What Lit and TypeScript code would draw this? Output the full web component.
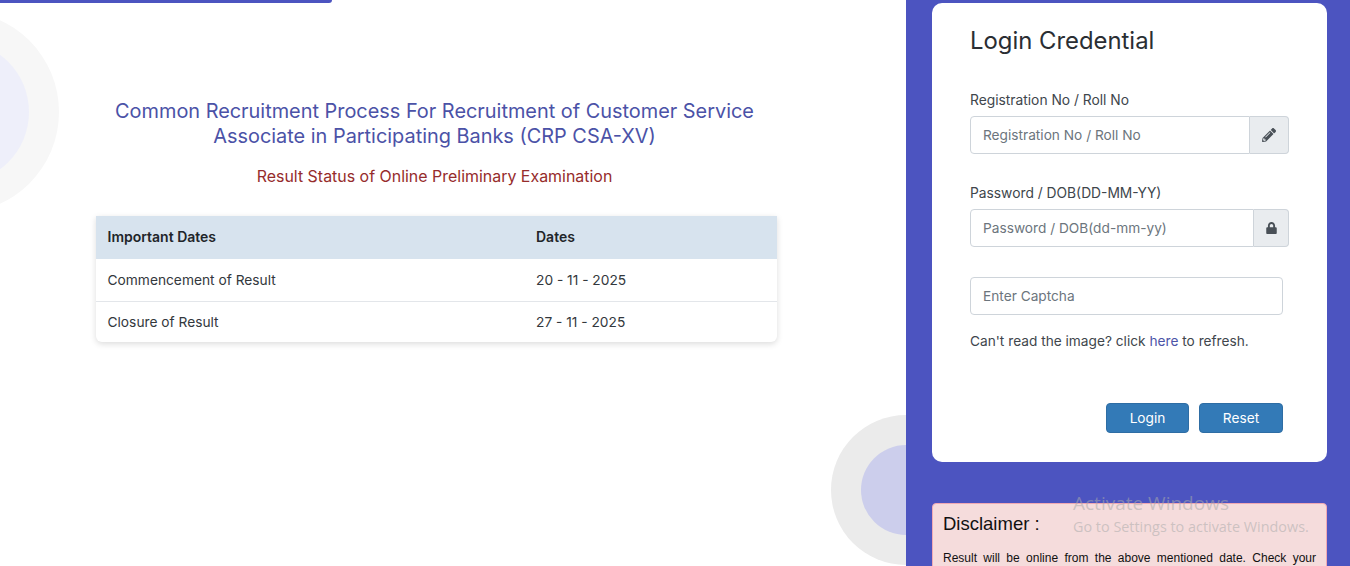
import { LitElement, html, css } from "lit";
import { customElement } from "lit/decorators.js";

@customElement("app-root")
export class AppRoot extends LitElement {
  static styles = css`
    :host { display: block; height: 566px; overflow: hidden; font-family: Inter, "Liberation Sans", sans-serif; background: #fff; }
    * { box-sizing: border-box; }
    .page { position: relative; display: flex; height: 566px; overflow: hidden; }
    .left { position: relative; width: 906px; flex: none; padding: 99px 129px 0 96px; overflow: hidden; }
    .topbar { position: absolute; left: 0; top: 0; width: 332px; height: 3px; background: #4c54c0; border-bottom-right-radius: 5px; }
    .circle { position: absolute; border-radius: 50%; }
    .c1 { left: -143px; top: 11px; width: 202px; height: 202px; background: #f7f7f7; }
    .c2 { left: -113px; top: 41px; width: 142px; height: 142px; background: #eeeffa; }
    .c3 { left: 831px; top: 415px; width: 150px; height: 150px; background: #ebebeb; }
    .c4 { left: 861px; top: 445px; width: 90px; height: 90px; background: #ccceec; }
    .head { position: relative; text-align: center; margin-left: -4px; }
    h1 { margin: 0; font-size: 19.9px; line-height: 25px; font-weight: 400; color: #4b52a7; }
    h2 { margin: 16px 0 0; font-size: 15.95px; line-height: 24px; font-weight: 400; color: #962c2c; }
    .dates { position: relative; width: 681px; margin-top: 27px; font-size: 13.75px; color: #33383d; background: #fff; border-radius: 0 0 6px 6px; box-shadow: 0 2px 6px rgba(0,0,0,.14); }
    .row { display: grid; grid-template-columns: 428.5px 1fr; align-items: center; padding-left: 11.5px; height: 42px; }
    .row.hd { height: 43px; background: #d7e3ee; font-size: 14px; font-weight: 600; color: #212529; padding-bottom: 2px; }
    .row.last { border-top: 1px solid #e3e6ea; padding-bottom: 1px; height: 41px; }
    .right { position: relative; flex: 1; background: #4c54c0; padding: 3px 23px 0 26px; }
    .card { background: #fff; border-radius: 10px; height: 459px; padding: 23px 38px 0 38px; color: #212529; }
    .card h3 { margin: 0; font-size: 23.875px; line-height: 29px; font-weight: 400; color: #2a2e33; }
    .lab { display: block; font-size: 13.8px; line-height: 21px; color: #40464c; }
    .l1 { margin-top: 35px; }
    .l2 { margin-top: 29px; }
    .group { display: flex; height: 38px; margin-top: 5px; }
    .capgroup { margin-top: 30px; width: 313px; }
    .field { flex: 1; display: flex; align-items: center; height: 38px; padding: 0 12px; border: 1px solid #ced4da; border-radius: 4px 0 0 4px; font-size: 13.7px; color: #6c757d; background: #fff; }
    .addon { display: flex; align-items: center; justify-content: center; border: 1px solid #ced4da; border-left: 0; border-radius: 0 4px 4px 0; background: #e9ecef; }
    .a1 { width: 39px; }
    .a2 { width: 35px; }
    .addon svg { display: block; width: 14px; height: 14px; fill: #495057; }
    .addon .lock { width: 11px; height: 12px; }
    .cap { border-radius: 4px; }
    .hint { margin: 16px 0 0; font-size: 13.7px; line-height: 21px; color: #40464c; }
    .hint span { color: #4c54a8; }
    .btns { display: flex; justify-content: flex-end; gap: 10px; width: 313px; margin-top: 51px; }
    .btn { display: flex; align-items: center; justify-content: center; height: 30px; border-radius: 4px; background: #337ab7; border: 1px solid #2e6da4; color: #fff; font-size: 13.7px; }
    .b1 { width: 83px; }
    .b2 { width: 84px; }
    .disc { margin-top: 41px; height: 120px; background: #f5dcdc; border: 1px solid #f0a9b4; border-radius: 4px; padding: 9px 10px 0 10px; font-family: "Liberation Sans", Arial, sans-serif; color: #111; }
    .disc h4 { margin: 0; font-size: 18.5px; line-height: 22px; font-weight: 400; }
    .disc p { margin: 14px 0 0; font-size: 12px; line-height: 18px; text-align: justify; }
    .wm { position: absolute; left: 167px; top: 490px; color: rgba(170,170,170,.55); font-family: "Open Sans", sans-serif; pointer-events: none; }
    .wm div:first-child { font-size: 19px; line-height: 27px; }
    .wm div:last-child { font-size: 14.4px; line-height: 19px; }
  `;

  render() {
    return html`
      <div class="page">
        <div class="left">
          <div class="circle c1"></div>
          <div class="circle c2"></div>
          <div class="circle c3"></div>
          <div class="circle c4"></div>
          <div class="topbar"></div>
          <div class="head">
            <h1>Common Recruitment Process For Recruitment of Customer Service<br />Associate in Participating Banks (CRP CSA-XV)</h1>
            <h2>Result Status of Online Preliminary Examination</h2>
          </div>
          <div class="dates">
            <div class="row hd"><span>Important Dates</span><span>Dates</span></div>
            <div class="row"><span>Commencement of Result</span><span>20 - 11 - 2025</span></div>
            <div class="row last"><span>Closure of Result</span><span>27 - 11 - 2025</span></div>
          </div>
        </div>
        <div class="right">
          <div class="card">
            <h3>Login Credential</h3>
            <label class="lab l1">Registration No / Roll No</label>
            <div class="group">
              <div class="field">Registration No / Roll No</div>
              <div class="addon a1">
                <svg viewBox="0 0 512 512"><path d="M497.9 142.1l-46.1 46.1c-4.7 4.7-12.3 4.7-17 0l-111-111c-4.7-4.7-4.7-12.3 0-17l46.1-46.1c18.7-18.7 49.1-18.7 67.9 0l60.1 60.1c18.8 18.7 18.8 49.1 0 67.9zM284.2 99.8L21.6 362.4.4 483.9c-2.9 16.4 11.4 30.6 27.8 27.8l121.5-21.3 262.6-262.6c4.7-4.7 4.7-12.3 0-17l-111-111c-4.8-4.7-12.4-4.7-17.1 0zM124.1 339.9c-5.5-5.5-5.5-14.3 0-19.8l154-154c5.5-5.5 14.3-5.5 19.8 0s5.5 14.3 0 19.8l-154 154c-5.5 5.5-14.3 5.5-19.8 0zM88 424h48v36.3l-64.5 11.3-31.1-31.1L51.7 376H88v48z"/></svg>
              </div>
            </div>
            <label class="lab l2">Password / DOB(DD-MM-YY)</label>
            <div class="group">
              <div class="field">Password / DOB(dd-mm-yy)</div>
              <div class="addon a2">
                <svg class="lock" viewBox="0 0 448 512"><path d="M400 224h-24v-72C376 68.2 307.8 0 224 0S72 68.2 72 152v72H48c-26.5 0-48 21.5-48 48v192c0 26.5 21.5 48 48 48h352c26.5 0 48-21.5 48-48V272c0-26.5-21.5-48-48-48zm-104 0H152v-72c0-39.7 32.3-72 72-72s72 32.3 72 72v72z"/></svg>
              </div>
            </div>
            <div class="group capgroup"><div class="field cap">Enter Captcha</div></div>
            <p class="hint">Can't read the image? click <span>here</span> to refresh.</p>
            <div class="btns">
              <div class="btn b1">Login</div>
              <div class="btn b2">Reset</div>
            </div>
          </div>
          <div class="disc">
            <h4>Disclaimer :</h4>
            <p>Result will be online from the above mentioned date. Check your result regularly on the website.</p>
          </div>
          <div class="wm"><div>Activate Windows</div><div>Go to Settings to activate Windows.</div></div>
        </div>
      </div>
    `;
  }
}
